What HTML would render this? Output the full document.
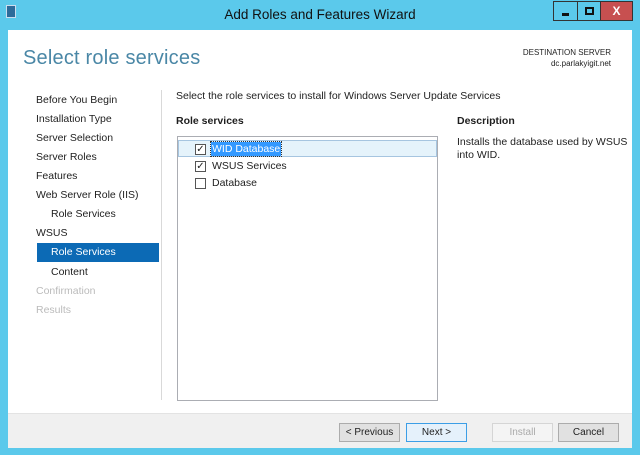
<!DOCTYPE html>
<html><head><meta charset="utf-8"><style>
*{margin:0;padding:0;box-sizing:border-box}
body{width:640px;height:455px;background:#5bc9eb;font-family:"Liberation Sans",sans-serif;font-size:10.5px;color:#1e1e1e;position:relative;overflow:hidden}
.title{position:absolute;left:0;top:0;width:640px;height:30px;text-align:center;line-height:29px;font-size:13.5px;color:#111}
.ctl{position:absolute;top:1px;height:20px;border:1px solid #333;}
.main{position:absolute;left:8px;top:30px;width:624px;height:418px;background:#fff}
.foot{position:absolute;left:0;top:383px;width:624px;height:35px;background:#f0f0f0;border-top:1px solid #e3e3e3}
.h1{position:absolute;left:15px;top:17px;font-size:20px;color:#4a87a6;letter-spacing:0.2px}
.dest{position:absolute;right:21px;top:17px;text-align:right;font-size:8px;line-height:11px;color:#222}
.nav div{position:absolute;left:28px;height:19px;line-height:19px}
.btn{position:absolute;top:393px;width:61px;height:19px;border:1px solid #acacac;background:#e1e1e1;text-align:center;line-height:17px;font-size:10px}
</style></head><body>
<div class="title">Add Roles and Features Wizard</div>
<div style="position:absolute;left:6px;top:5px;width:10px;height:13px;background:#2d6b9a;border:1px solid #cde"></div>
<div class="ctl" style="left:553px;width:24px;background:#5bc9eb;border-right:none"><div style="position:absolute;left:8px;top:11px;width:7px;height:3px;background:#111"></div></div>
<div class="ctl" style="left:577px;width:24px;background:#5bc9eb"><div style="position:absolute;left:7px;top:5px;width:9px;height:8px;border:2px solid #111"></div></div>
<div class="ctl" style="left:601px;width:32px;background:#c75050;color:#fff;font-weight:bold;text-align:center;line-height:18px;font-size:12px;border-left:none">X</div>
<div class="main">
<div class="h1">Select role services</div>
<div class="dest">DESTINATION SERVER<br>dc.parlakyigit.net</div>
<div style="position:absolute;left:153px;top:60px;width:1px;height:310px;background:#d9d9d9"></div>
<div class="nav">
<div style="top:61px">Before You Begin</div>
<div style="top:80px">Installation Type</div>
<div style="top:99px">Server Selection</div>
<div style="top:118px">Server Roles</div>
<div style="top:137px">Features</div>
<div style="top:156px">Web Server Role (IIS)</div>
<div style="top:175px;left:43px">Role Services</div>
<div style="top:194px">WSUS</div>
<div style="top:213px;left:29px;width:122px;background:#0c6ab5;color:#fff;padding-left:14px">Role Services</div>
<div style="top:233px;left:43px">Content</div>
<div style="top:252px;color:#bbb">Confirmation</div>
<div style="top:271px;color:#bbb">Results</div>
</div>
<div style="position:absolute;left:168px;top:60px">Select the role services to install for Windows Server Update Services</div>
<div style="position:absolute;left:168px;top:85px;font-weight:bold">Role services</div>
<div style="position:absolute;left:449px;top:85px;font-weight:bold">Description</div>
<div style="position:absolute;left:449px;top:106px;line-height:13px;white-space:nowrap">Installs the database used by WSUS<br>into WID.</div>
<div style="position:absolute;left:169px;top:106px;width:261px;height:265px;border:1px solid #abadb3">
<div style="position:absolute;left:0;top:3px;width:259px;height:17px;background:#e5f3fb;border:1px solid #a6c5e0"></div>
<div style="position:absolute;left:17px;top:7px;width:11px;height:11px;border:1px solid #555;background:#fff;font-size:10px;line-height:9px;text-align:center">✓</div>
<div style="position:absolute;left:33px;top:5px;background:#3399ff;color:#fff;padding:0 1px;line-height:14px;outline:1px dotted #333">WID Database</div>
<div style="position:absolute;left:17px;top:24px;width:11px;height:11px;border:1px solid #555;background:#fff;font-size:10px;line-height:9px;text-align:center">✓</div>
<div style="position:absolute;left:34px;top:22px;line-height:14px">WSUS Services</div>
<div style="position:absolute;left:17px;top:41px;width:11px;height:11px;border:1px solid #555;background:#fff"></div>
<div style="position:absolute;left:34px;top:39px;line-height:14px">Database</div>
</div>
<div class="foot"></div>
<div class="btn" style="left:331px">&lt; Previous</div>
<div class="btn" style="left:398px;border-color:#3c9ee6;background:#e5f1fb">Next &gt;</div>
<div class="btn" style="left:484px;color:#aaa;background:#f4f4f4;border-color:#d5d5d5">Install</div>
<div class="btn" style="left:550px">Cancel</div>
</div>
</body></html>
